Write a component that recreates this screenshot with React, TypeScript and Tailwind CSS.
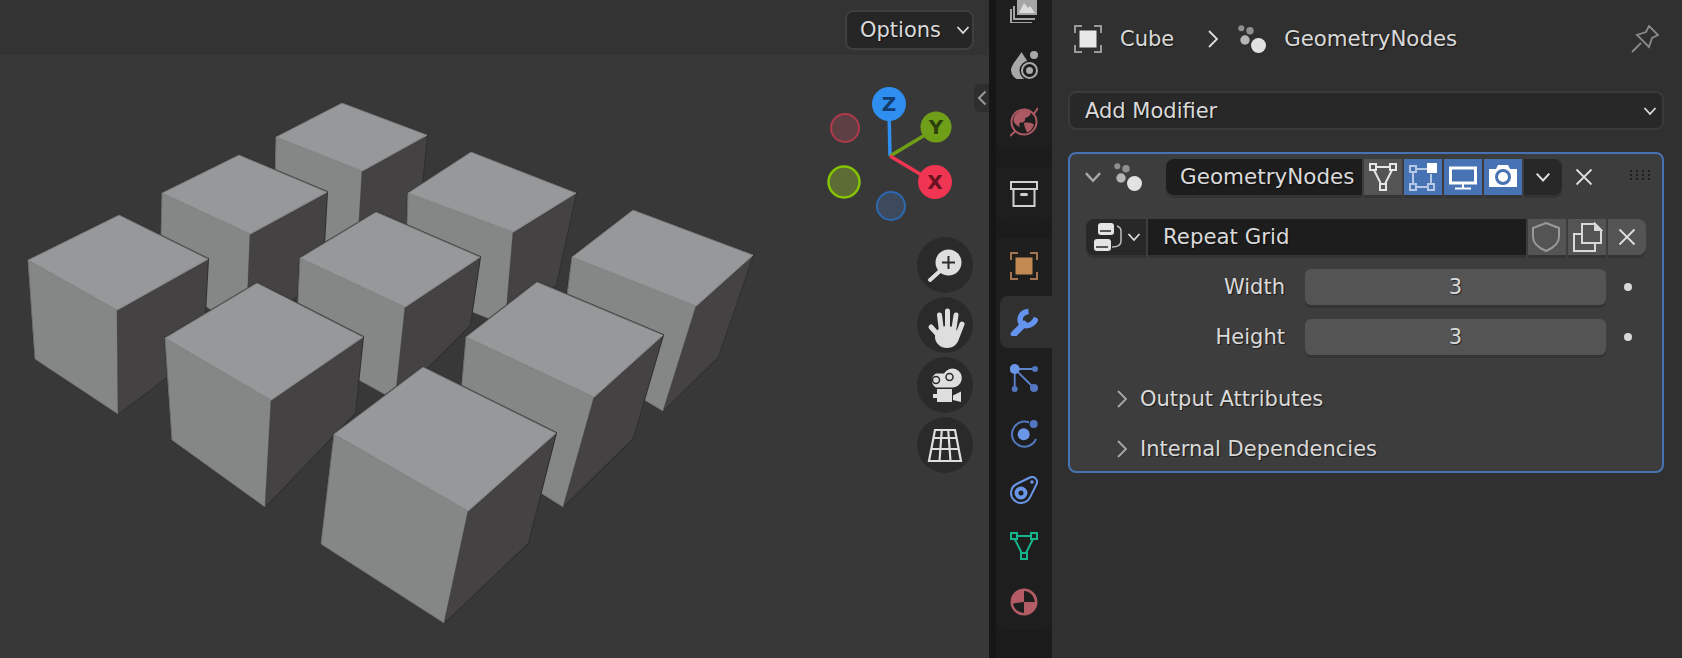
import type { ReactNode } from 'react';

type Pt = [number, number];

type Cube = { t: Pt; r: Pt; f: Pt; l: Pt; lb: Pt; fb: Pt; rb: Pt };

// back to front, so the nearer ones cover the others
const cubes: Cube[] = [
  { t: [342, 103], r: [427, 135], f: [362, 171], l: [276, 137], lb: [274, 230], fb: [356, 270], rb: [418, 225] },
  { t: [239, 155], r: [327, 192], f: [250, 234], l: [162, 193], lb: [160, 280], fb: [246, 330], rb: [322, 280] },
  { t: [471, 152], r: [576, 193], f: [513, 232], l: [408, 193], lb: [405, 285], fb: [505, 325], rb: [556, 285] },
  { t: [119, 215], r: [208, 259], f: [117, 310], l: [28, 260], lb: [35, 359], fb: [118, 414], rb: [203, 350] },
  { t: [376, 212], r: [480, 257], f: [405, 307], l: [300, 258], lb: [296, 345], fb: [395, 400], rb: [470, 325] },
  { t: [633, 210], r: [753, 255], f: [696, 306], l: [572, 257], lb: [560, 350], fb: [663, 411], rb: [718, 357] },
  { t: [257, 283], r: [363, 337], f: [271, 400], l: [165, 338], lb: [172, 440], fb: [265, 507], rb: [355, 413] },
  { t: [537, 282], r: [663, 335], f: [594, 397], l: [466, 337], lb: [457, 440], fb: [563, 507], rb: [633, 438] },
  { t: [423, 367], r: [556, 433], f: [468, 511], l: [334, 434], lb: [321, 544], fb: [444, 623], rb: [528, 543] },
];

const pts = (...p: Pt[]) => p.map((q) => q.join(',')).join(' ');

const CubeField = () => (
  <svg className="absolute left-0 top-0" width={989} height={658} viewBox="0 0 989 658">
    {cubes.map((c, i) => (
      <g key={i} strokeLinejoin="round">
        <polygon points={pts(c.t, c.r, c.rb, c.fb, c.lb, c.l)} fill="#2c2c2c" stroke="#2f2f2f" strokeWidth={2} />
        <polygon points={pts(c.l, c.f, c.fb, c.lb)} fill="#858786" stroke="#6d6f6f" strokeWidth={1} />
        <polygon points={pts(c.f, c.r, c.rb, c.fb)} fill="#444243" />
        <polygon points={pts(c.t, c.r, c.f, c.l)} fill="#97989a" stroke="#6f7172" strokeWidth={1} />
        <polyline points={pts(c.l, c.f, c.r)} fill="none" stroke="#8f9091" strokeWidth={1} />
      </g>
    ))}
  </svg>
);

const Gizmo = () => (
  <svg className="absolute left-[820px] top-[80px]" width={140} height={150} viewBox="820 80 140 150">
    <circle cx={845} cy={128} r={14} fill="#5d3f44" stroke="#b03a4c" strokeWidth={2} />
    <circle cx={844} cy={182} r={15.5} fill="#5d6b35" stroke="#84c400" strokeWidth={2.5} />
    <circle cx={891} cy={206} r={14} fill="#3d4a5e" stroke="#2d69b0" strokeWidth={2} />
    <line x1={890} y1={156} x2={889} y2={110} stroke="#2e8ff0" strokeWidth={3.5} />
    <line x1={890} y1={156} x2={930} y2={132} stroke="#6f9e18" strokeWidth={3.5} />
    <line x1={890} y1={156} x2={930} y2={180} stroke="#ef3552" strokeWidth={3.5} />
    <circle cx={889} cy={104} r={17} fill="#2e8ff0" />
    <circle cx={936} cy={127} r={15.5} fill="#6f9e18" />
    <circle cx={935} cy={182} r={17} fill="#ef3552" />
    <text x={889} y={111} textAnchor="middle" fontFamily="DejaVu Sans" fontWeight={700} fontSize={20} fill="#143c6e" style={{ textShadow: 'none' }}>Z</text>
    <text x={936} y={134} textAnchor="middle" fontFamily="DejaVu Sans" fontWeight={700} fontSize={20} fill="#2d400c" style={{ textShadow: 'none' }}>Y</text>
    <text x={935} y={189} textAnchor="middle" fontFamily="DejaVu Sans" fontWeight={700} fontSize={20} fill="#681222" style={{ textShadow: 'none' }}>X</text>
  </svg>
);

const Zoom = () => (
  <svg width={56} height={56} viewBox="0 0 56 56">
    <line x1={23} y1={34} x2={13} y2={43} stroke="#dedede" strokeWidth={4} strokeLinecap="round" />
    <circle cx={31.5} cy={25.5} r={13} fill="#dedede" />
    <path d="M31.5 19v13M25 25.5h13" stroke="#2a2a2a" strokeWidth={2} />
  </svg>
);

const Hand = () => (
  <svg width={56} height={56} viewBox="0 0 56 56">
    <path d="M22.5 18l2.5 20M30.5 14v24M39 18l-3 20M45 27l-5 13M14 30l9 10" stroke="#dedede" strokeWidth={5} strokeLinecap="round" fill="none" />
    <ellipse cx={30} cy={40} rx={12} ry={11} fill="#dedede" />
  </svg>
);

const Movie = () => (
  <svg width={56} height={56} viewBox="0 0 56 56">
    <path d="M19 16.500a8 8 0 0 0 0 14h16a9.500 9.500 0 1 0-8-14z" fill="#dedede" />
    <circle cx={19} cy={23} r={3.500} fill="#dedede" stroke="#2a2a2a" strokeWidth={1.500} />
    <circle cx={32.500} cy={20} r={3.500} fill="#dedede" stroke="#2a2a2a" strokeWidth={1.500} />
    <path d="M20 32h15v13H20zM16 37h4v4h-4zM36 38.500l8-4v10.500l-8-2z" fill="#dedede" />
  </svg>
);

const Grid = () => (
  <svg width={56} height={56} viewBox="0 0 56 56">
    <path d="M18 13h20l6 31H12zM16.500 21h23M14.500 32h27M24.800 13L22.500 44M31.200 13l2.300 31" fill="none" stroke="#dedede" strokeWidth={2.200} />
  </svg>
);

const Round = ({ children }: { children: ReactNode }) => (
  <div className="flex size-[56px] items-center justify-center rounded-full bg-[#2a2a2a]">{children}</div>
);

const Ico = ({ children, w = 28, h = 28 }: { children: ReactNode; w?: number; h?: number }) => (
  <svg width={w} height={h} viewBox={`0 0 ${w} ${h}`} className="shrink-0" fill="none">
    {children}
  </svg>
);

const Particles = () => (
  <Ico>
    <circle cx={3.300} cy={3.300} r={3} fill="#8f8f8f" />
    <circle cx={12} cy={5.700} r={3.700} fill="#8f8f8f" />
    <circle cx={7} cy={15} r={4.700} fill="#b5b5b5" />
    <circle cx={20.500} cy={20.500} r={7.500} fill="#e2e2e2" />
  </Ico>
);

const ObjectIcon = ({ frame, box }: { frame: string; box: string }) => (
  <Ico>
    <path d="M1 8V1h7M20 1h7v7M1 20v7h7M20 27h7v-7" stroke={frame} strokeWidth={2} />
    <rect x={5.500} y={5.500} width={17} height={17} fill={box} />
  </Ico>
);

const ChevronDown = ({ size = 14, color = '#dedede' }: { size?: number; color?: string }) => (
  <svg width={size} height={size} viewBox="0 0 14 14" className="shrink-0" fill="none">
    <path d="M1.500 4l5.500 6 5.500-6" stroke={color} strokeWidth={1.800} />
  </svg>
);

const ChevronRight = ({ color = '#a8a8a8' }: { color?: string }) => (
  <svg width={12} height={18} viewBox="0 0 12 18" className="shrink-0" fill="none">
    <path d="M2 1l8 8-8 8" stroke={color} strokeWidth={1.800} />
  </svg>
);

const Cross = () => (
  <svg width={18} height={18} viewBox="0 0 18 18" className="shrink-0" fill="none">
    <path d="M1.500 1.500l15 15M16.500 1.500l-15 15" stroke="#dedede" strokeWidth={1.800} />
  </svg>
);

const navA = [
  <Ico key="tex">
    <path d="M1 14v14h21M4 11v13h21" stroke="#a5a5a5" strokeWidth={2} />
    <rect x={7} y={-3} width={20} height={23} fill="#a5a5a5" />
    <path d="M9 18l5-10 4 5 2-2 5 7z" fill="#dcdcdc" />
  </Ico>,
  <Ico key="fx">
    <path d="M11.500 1C8 7 1 14 1 19a10 10 0 0 0 20 0C21 14 15 7 11.500 1z" fill="#a8a8a8" />
    <circle cx={24} cy={4} r={4} fill="#a8a8a8" />
    <circle cx={19.500} cy={19.500} r={10} fill="#1e1e1e" />
    <circle cx={19.500} cy={19.500} r={7.500} stroke="#a8a8a8" strokeWidth={2} />
    <circle cx={19.500} cy={19.500} r={3.500} fill="#a8a8a8" />
  </Ico>,
  <svg key="world" width={28} height={30} viewBox="0 0 28 30" className="mt-[2px] shrink-0" fill="none">
    <circle cx={14} cy={15} r={12.500} stroke="#ad5a65" strokeWidth={2} />
    <path d="M0 29l5-4.500M23 8l5-7" stroke="#ad5a65" strokeWidth={2} />
    <path d="M3.500 12C5 6 10 3 15 3c3 .500 5 2 6 3-1 3-3 4-6 5 1 3-2 5-5 4.500-1 1-1 3 0 4.500-3-1-7-4-6.500-8zM14 16c4-1 8 0 10 1.500-1 4-4 7-7 8-1-3-3-6-3-9.500z" fill="#ad5a65" />
  </svg>,
];

const navC = [
  <ObjectIcon key="obj" frame="#a5754f" box="#c48a53" />,
  <Ico key="mod">
    <path d="M4 26l10-10" stroke="#6494ef" strokeWidth={6.500} strokeLinecap="round" />
    <path d="M18.500 3.500C12 4 9 9 10.500 14c1.500 5 11.500 6 16-4" stroke="#6494ef" strokeWidth={5.500} />
  </Ico>,
  <Ico key="part">
    <path d="M4.700 5H25M4.700 5v20M4.700 5L24 24" stroke="#5f83cc" strokeWidth={1.800} />
    <circle cx={4.700} cy={5} r={5} fill="#6b96e8" />
    <circle cx={25} cy={5} r={3} fill="#5277c0" />
    <circle cx={4.700} cy={25} r={3} fill="#5277c0" />
    <circle cx={24} cy={24} r={4} fill="#5277c0" />
  </Ico>,
  <Ico key="phys">
    <path d="M19 2.500A12.500 12.500 0 1 0 26 19" stroke="#5277c0" strokeWidth={2} />
    <circle cx={13.700} cy={14.300} r={6} fill="#6b96e8" />
    <circle cx={23.700} cy={4} r={4} fill="#5277c0" />
  </Ico>,
  <Ico key="con">
    <path d="M6.600 8L19.800 1.500A5 5 0 0 1 26.500 8.200L20 21.400A10 10 0 1 1 6.600 8z" stroke="#6b96e8" strokeWidth={2} />
    <circle cx={11} cy={17} r={4.500} stroke="#6b96e8" strokeWidth={4} />
    <circle cx={22} cy={6} r={1.800} fill="#6b96e8" />
  </Ico>,
  <Ico key="data">
    <path d="M6.700 4h14M4.700 7l7 14M23 7l-7 14" stroke="#14b48c" strokeWidth={2} />
    <rect x={1} y={1} width={6} height={6} stroke="#14b48c" strokeWidth={2} />
    <rect x={21} y={1} width={6} height={6} stroke="#14b48c" strokeWidth={2} />
    <rect x={11} y={21} width={6} height={6} stroke="#14b48c" strokeWidth={2} />
  </Ico>,
  <Ico key="mat">
    <circle cx={14} cy={14} r={13.500} fill="#b35c66" />
    <path d="M14 14V3c6 .500 10 4.500 11 11zM14 14v11C8 24.500 4 21 3 15.500z" fill="#1e1e1e" />
  </Ico>,
];

const NavItem = ({ children, active }: { children: ReactNode; active?: boolean }) => (
  <div className={active ? 'ml-1 flex h-[52px] my-[2px] items-center justify-center rounded-l-lg bg-[#303030] pr-1' : 'flex h-14 items-center justify-center'}>
    {children}
  </div>
);

const NavBar = () => (
  <div className="flex w-[63px] shrink-0 bg-[#161616] pl-[7px]">
    <div className="w-full bg-[#1b1b1b]">
      <div className="-mt-[19px] rounded-b-lg bg-[#1e1e1e]">
        {navA.map((n) => (
          <NavItem key={n.key}>{n}</NavItem>
        ))}
      </div>
      <div className="mt-[18px] rounded-b-lg bg-[#1e1e1e]">
        <NavItem>
          <Ico>
            <path d="M1 1h26v7H1zM3.500 8v17h21V8" stroke="#d0d0d0" strokeWidth={2} />
            <rect x={10} y={12} width={8} height={3} rx={1.500} fill="#d0d0d0" />
          </Ico>
        </NavItem>
      </div>
      <div className="mt-[15px] rounded-b-lg bg-[#1e1e1e]">
        {navC.map((n) => (
          <NavItem key={n.key} active={n.key === 'mod'}>
            {n}
          </NavItem>
        ))}
      </div>
    </div>
  </div>
);

const Btn = ({ children, className = 'bg-[#545454]' }: { children: ReactNode; className?: string }) => (
  <div className={`flex h-9 w-[38px] shrink-0 items-center justify-center shadow-[0_3px_0_#343434] ${className}`}>{children}</div>
);

const ValueRow = ({ label }: { label: string }) => (
  <div className="mt-[14px] flex h-9 items-center">
    <div className="w-[215px] text-right">{label}</div>
    <div className="ml-5 flex h-9 w-[301px] items-center justify-center rounded-md bg-[#545454] shadow-[0_3px_0_#343434]">3</div>
    <div className="ml-[18px] size-2 rounded-full bg-[#d8d8d8]" />
  </div>
);

const SubPanel = ({ label }: { label: string }) => (
  <div className="flex h-[50px] items-center gap-3 pl-[46px]">
    <ChevronRight />
    <span>{label}</span>
  </div>
);

export default function App() {
  return (
    <div className="flex h-[658px] w-[1682px] overflow-hidden bg-[#383838] font-['DejaVu_Sans',sans-serif] text-[21px] leading-none text-[#dadada] [text-shadow:1px_1px_1px_rgba(0,0,0,0.55)]">
      {/* 3D viewport */}
      <div className="relative w-[989px] shrink-0">
        <CubeField />
        <div className="relative flex h-[55px] justify-end bg-[#333333] pr-[15px] pt-[10px]">
          <div className="flex h-10 w-[129px] items-center gap-[15px] rounded-lg border-2 border-[#3f3f3f] bg-[#262626] pl-[13px]">
            <span>Options</span>
            <ChevronDown />
          </div>
        </div>
        <Gizmo />
        <div className="absolute right-0 top-[84px] flex h-7 w-[15px] items-center justify-center rounded-l-md bg-[#2e2e2e]">
          <svg width={10} height={16} viewBox="0 0 10 16" fill="none">
            <path d="M8.500 1.500L2 8l6.500 6.500" stroke="#9a9a9a" strokeWidth={2} />
          </svg>
        </div>
        <div className="absolute left-[917px] top-[237px] flex flex-col gap-1">
          <Round><Zoom /></Round>
          <Round><Hand /></Round>
          <Round><Movie /></Round>
          <Round><Grid /></Round>
        </div>
      </div>

      <NavBar />

      {/* Properties editor */}
      <div className="flex-1 bg-[#303030] pl-4 pr-[18px]">
        <div className="flex h-[78px] items-center pl-[6px]">
          <ObjectIcon frame="#9a9a9a" box="#e8e8e8" />
          <span className="ml-[18px]">Cube</span>
          <span className="ml-[33px]"><ChevronRight color="#dedede" /></span>
          <span className="ml-[19px]"><Particles /></span>
          <span className="ml-[18px] text-[21.300px]">GeometryNodes</span>
          <svg className="ml-auto mr-[5px]" width={28} height={28} viewBox="0 0 28 28" fill="none">
            <path d="M1 27l9-9M18 1l9 9-6 3-3 9L6 10l9-3z" stroke="#8a8a8a" strokeWidth={1.800} />
          </svg>
        </div>

        <div className="mt-[13px] flex h-[39px] items-center justify-between rounded-lg border-2 border-[#3a3a3a] bg-[#282828] pb-[1px] pl-[15px] pr-[5px] pt-[2px]">
          <span>Add Modifier</span>
          <ChevronDown />
        </div>

        <div className="mt-[22px] h-[321px] rounded-lg border-2 border-[#4772b3] bg-[#3d3d3d]">
          <div className="mt-[5px] flex h-9 items-center pl-[14px]">
            <ChevronDown size={18} color="#a8a8a8" />
            <span className="ml-3"><Particles /></span>
            <div className="ml-6 flex h-9 w-[196px] items-center rounded-l-lg bg-[#1d1d1d] pl-[14px] text-[21.500px] shadow-[0_3px_0_#343434]">
              GeometryNodes
            </div>
            <div className="ml-[2px] flex gap-[2px]">
              <Btn>
                <svg width={38} height={36} viewBox="0 0 38 36" fill="none" stroke="#e6e6e6" strokeWidth={2}>
                  <path d="M12 8h14M10 11l7 14M28 11l-7 14" />
                  <rect x={6} y={5} width={6} height={6} />
                  <rect x={26} y={5} width={6} height={6} />
                  <rect x={16} y={25} width={6} height={6} />
                </svg>
              </Btn>
              <Btn className="bg-[#4772b3]">
                <svg width={38} height={36} viewBox="0 0 38 36" fill="none" stroke="#b4c8e6" strokeWidth={2}>
                  <path d="M12 10h12M9 13v12M12 28h12M27 15v10" />
                  <rect x={6} y={7} width={6} height={6} />
                  <rect x={6} y={25} width={6} height={6} />
                  <rect x={24} y={25} width={6} height={6} />
                  <rect x={23} y={4} width={10} height={10} fill="#ffffff" stroke="none" />
                </svg>
              </Btn>
              <Btn className="bg-[#4772b3]">
                <svg width={38} height={36} viewBox="0 0 38 36" fill="none" stroke="#ffffff">
                  <rect x={6.500} y={9} width={25} height={15} strokeWidth={3} />
                  <path d="M19 24v5M11 29.500h16" strokeWidth={2} />
                </svg>
              </Btn>
              <Btn className="bg-[#4772b3]">
                <svg width={38} height={36} viewBox="0 0 38 36" fill="none">
                  <path d="M5 10h7l2-4h10l2 4h7v18H5z" fill="#ffffff" />
                  <circle cx={19} cy={18} r={6.500} stroke="#4772b3" strokeWidth={3} />
                </svg>
              </Btn>
              <Btn className="rounded-r-lg bg-[#282828]">
                <ChevronDown size={16} />
              </Btn>
            </div>
            <span className="ml-[13px]"><Cross /></span>
            <svg className="ml-[37px]" width={20} height={14} viewBox="0 0 20 14" fill="#1e1e1e">
              <path d="M0 0h2v2H0zM6 0h2v2H6zM12 0h2v2h-2zM18 0h2v2h-2zM0 4h2v2H0zM6 4h2v2H6zM12 4h2v2h-2zM18 4h2v2h-2zM0 8h2v2H0zM6 8h2v2H6zM12 8h2v2h-2zM18 8h2v2h-2z" />
            </svg>
          </div>

          <div className="ml-4 mt-6 flex h-9 gap-[2px]">
            <div className="flex h-9 w-[60px] items-center gap-[3px] rounded-l-lg bg-[#282828] shadow-[0_3px_0_#343434]">
              <svg width={38} height={36} viewBox="0 0 38 36" fill="none" className="shrink-0">
                <rect x={12} y={4} width={16} height={12} rx={3} fill="#e4e4e4" />
                <rect x={8} y={20} width={17} height={12} rx={3} fill="#e4e4e4" />
                <path d="M14 12h11M10 28h12" stroke="#282828" strokeWidth={1.600} />
                <path d="M31 7c3 1 4 3 4 5v10c0 4-3 6-9 6" stroke="#bdbdbd" strokeWidth={1.500} />
              </svg>
              <ChevronDown />
            </div>
            <div className="flex h-9 w-[378px] items-center bg-[#1d1d1d] pl-[15px] text-[21.300px] shadow-[0_3px_0_#343434]">Repeat Grid</div>
            <Btn>
              <svg width={38} height={36} viewBox="0 0 38 36" fill="none">
                <path d="M18 4l13 5v9c0 7-6 11-13 14-7-3-13-7-13-14V9z" stroke="#9a9a9a" strokeWidth={2} />
              </svg>
            </Btn>
            <Btn>
              <svg width={38} height={36} viewBox="0 0 38 36" fill="none" stroke="#d8d8d8" strokeWidth={2}>
                <path d="M14 5h13l6 6v13H14z" />
                <path d="M27 5l6 6h-6z" fill="#d8d8d8" />
                <path d="M13 15H6v17h21v-7" />
              </svg>
            </Btn>
            <Btn className="rounded-r-lg bg-[#545454]">
              <Cross />
            </Btn>
          </div>

          <ValueRow label="Width" />
          <ValueRow label="Height" />

          <div className="mt-[19px]">
            <SubPanel label="Output Attributes" />
            <SubPanel label="Internal Dependencies" />
          </div>
        </div>
      </div>
    </div>
  );
}
